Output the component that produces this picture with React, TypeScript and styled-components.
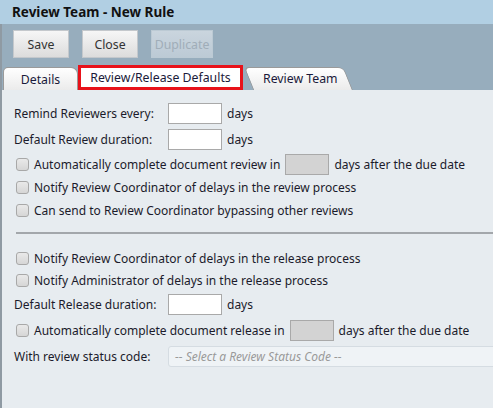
import * as React from 'react';
import styled, { createGlobalStyle, css } from 'styled-components';

const GlobalStyle = createGlobalStyle`
  html, body {
    margin: 0;
    padding: 0;
    height: 100%;
    overflow: hidden;
  }
  body {
    font-family: "Noto Sans", "Open Sans", Arial, sans-serif;
    font-size: 12px;
    color: #1b1b2b;
  }
  #root {
    height: 100%;
  }
`;

const Page = styled.div`
  display: flex;
  flex-direction: column;
  height: 100vh;
  width: 100%;
  background: #e7ecf0;
`;

const TitleBar = styled.div`
  height: 24px;
  display: flex;
  align-items: center;
  padding-left: 12px;
  background: #b1cfe3;
  font-size: 13.5px;
  font-weight: 700;
  color: #111;
`;

const Body = styled.div`
  flex: 1;
  display: flex;
  flex-direction: column;
  border-left: 2px solid #8f9aa3;
`;

const Toolbar = styled.div`
  background: #97adbd;
  display: flex;
  flex-direction: column;
`;

const ButtonRow = styled.div`
  display: flex;
  gap: 13px;
  padding: 6px 0 0 11px;
  height: 36px;
`;

const Button = styled.button<{ $w: number }>`
  width: ${(p) => p.$w}px;
  height: 28px;
  padding: 0;
  font-family: inherit;
  font-size: 12.3px;
  color: #333;
  border: 1px solid #c4c8cc;
  background: linear-gradient(#f6f6f6, #dcdcdc);
  cursor: pointer;
  &:disabled {
    color: #a0adb8;
    border-color: #bccad4;
    background: linear-gradient(#cad5de, #bccad5);
    cursor: default;
  }
`;

const TabRow = styled.div`
  height: 24px;
  display: flex;
  align-items: flex-end;
  padding-left: 1px;
`;

const tabFace = css`
  background: linear-gradient(#ffffff, #ebebeb);
  border: 1px solid #9a9a9a;
  border-bottom: none;
`;

const Tab = styled.div<{ $w: number; $active?: boolean; $slant?: boolean }>`
  position: relative;
  isolation: isolate;
  width: ${(p) => p.$w}px;
  height: 23px;
  box-sizing: border-box;
  display: flex;
  align-items: center;
  justify-content: center;
  color: #1a1a3a;
  font-size: 12.3px;
  ${tabFace}
  border-radius: 5px 7px 0 0;
  ${(p) =>
    p.$active &&
    css`
      height: 25px;
      background: #fff;
      border: 3px solid #e8121a;
      border-radius: 0;
      margin: 0 2px 0 0;
      z-index: 1;
    `}
  ${(p) =>
    p.$slant &&
    css`
      background: none;
      border: none;
      margin-left: 8px;
      justify-content: flex-start;
      padding-left: 10px;
      &::before {
        content: '';
        position: absolute;
        inset: 0;
        z-index: -1;
        ${tabFace}
        border-radius: 5px 6px 0 0;
        transform: skewX(22deg);
        transform-origin: bottom left;
      }
    `}
`;

const Content = styled.div`
  flex: 1;
  padding: 10px 0 0 12px;
  display: flex;
  flex-direction: column;
`;

const Row = styled.div<{ $h: number }>`
  height: ${(p) => p.$h}px;
  display: flex;
  align-items: center;
  white-space: nowrap;
`;

const Label = styled.span`
  width: 154px;
  flex-shrink: 0;
`;

const TextBox = styled.input`
  width: 54px;
  height: 21px;
  box-sizing: border-box;
  border: 1px solid #a9a9a9;
  background: #fff;
  margin: 0 5px 0 0;
  padding: 0;
`;

const InlineBox = styled.input`
  width: 44px;
  height: 21px;
  box-sizing: border-box;
  border: 1px solid #a9a9a9;
  background: #d3d3d3;
  margin: 0 5px;
  padding: 0;
`;

const Check = styled.span`
  width: 13px;
  height: 13px;
  box-sizing: border-box;
  border: 1px solid #a8a8a8;
  border-radius: 3px;
  background: linear-gradient(#e9e9e9, #d6d6d6);
  margin: 0 5px 0 2px;
  flex-shrink: 0;
`;

const Divider = styled.hr`
  border: none;
  border-top: 2px solid #a3a7ab;
  margin: 11px 0 13px 2px;
  height: 0;
`;

const Select = styled.div`
  flex: 1;
  height: 21px;
  box-sizing: border-box;
  display: flex;
  align-items: center;
  padding-left: 6px;
  margin-right: -4px;
  background: #eff3f6;
  border: 1px solid #d5dce2;
  border-radius: 3px;
  font-style: italic;
  color: #9a9a9a;
`;

function CheckRow({ text, h = 22 }: { text: string; h?: number }) {
  return (
    <Row $h={h}>
      <Check />
      {text}
    </Row>
  );
}

function App() {
  return (
    <Page>
      <GlobalStyle />
      <TitleBar>Review Team - New Rule</TitleBar>
      <Body>
        <Toolbar>
          <ButtonRow>
            <Button $w={56}>Save</Button>
            <Button $w={56}>Close</Button>
            <Button $w={62} disabled>
              Duplicate
            </Button>
          </ButtonRow>
          <TabRow>
            <Tab $w={75}>Details</Tab>
            <Tab $w={165} $active>
              Review/Release Defaults
            </Tab>
            <Tab $w={100} $slant>
              Review Team
            </Tab>
          </TabRow>
        </Toolbar>
        <Content>
          <Row $h={26}>
            <Label>Remind Reviewers every:</Label>
            <TextBox />
            days
          </Row>
          <Row $h={26}>
            <Label>Default Review duration:</Label>
            <TextBox />
            days
          </Row>
          <Row $h={24}>
            <Check />
            Automatically complete document review in
            <InlineBox disabled />
            days after the due date
          </Row>
          <CheckRow text="Notify Review Coordinator of delays in the review process" h={23} />
          <CheckRow text="Can send to Review Coordinator bypassing other reviews" />
          <Divider />
          <CheckRow text="Notify Review Coordinator of delays in the release process" />
          <CheckRow text="Notify Administrator of delays in the release process" />
          <Row $h={26}>
            <Label>Default Release duration:</Label>
            <TextBox />
            days
          </Row>
          <Row $h={26}>
            <Check />
            Automatically complete document release in
            <InlineBox disabled />
            days after the due date
          </Row>
          <Row $h={26}>
            <Label>With review status code:</Label>
            <Select>-- Select a Review Status Code --</Select>
          </Row>
        </Content>
      </Body>
    </Page>
  );
}

export default App;
